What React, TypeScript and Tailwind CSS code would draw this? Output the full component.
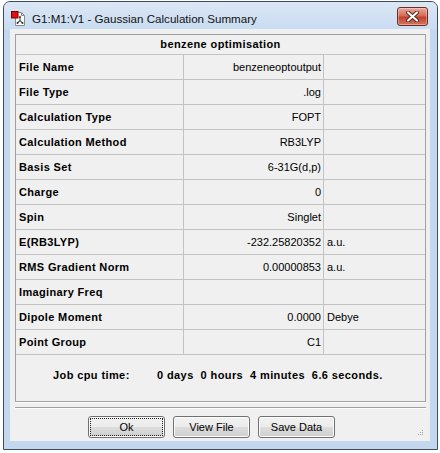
const rows: [string, string, string][] = [
  ['File Name', 'benzeneoptoutput', ''],
  ['File Type', '.log', ''],
  ['Calculation Type', 'FOPT', ''],
  ['Calculation Method', 'RB3LYP', ''],
  ['Basis Set', '6-31G(d,p)', ''],
  ['Charge', '0', ''],
  ['Spin', 'Singlet', ''],
  ['E(RB3LYP)', '-232.25820352', 'a.u.'],
  ['RMS Gradient Norm', '0.00000853', 'a.u.'],
  ['Imaginary Freq', '', ''],
  ['Dipole Moment', '0.0000', 'Debye'],
  ['Point Group', 'C1', ''],
]

function TitleIcon() {
  return (
    <svg width="16" height="16" viewBox="0 0 16 16" className="shrink-0">
      <path d="M4.5 1.5h6l3 3v10h-9z" fill="#fff" stroke="#8a8a8a" />
      <path d="M10.5 1.5v3h3" fill="none" stroke="#8a8a8a" />
      <path d="M9 6v3.5M9 9.5l-2.5 2.5M9 9.5l2.5 2.5" stroke="#555" strokeWidth="1.2" fill="none" />
      <circle cx="9" cy="6" r="1" fill="#333" />
      <circle cx="6.5" cy="12" r="1" fill="#333" />
      <circle cx="11.5" cy="12" r="1" fill="#333" />
      <rect x="0.5" y="0.5" width="6.5" height="6.5" fill="#e01010" stroke="#7a0000" />
    </svg>
  )
}

function CloseButton() {
  return (
    <div className="mr-[9px] mt-[5px] flex h-[19px] w-[31px] items-center justify-center rounded-[3px] border border-[#6e2b22] bg-[linear-gradient(#e9a99a,#d46d57_45%,#c0432c_55%,#d5765e)] shadow-[inset_0_0_0_1px_rgba(255,255,255,0.35)]">
      <svg width="13" height="11" viewBox="0 0 13 11">
        <path d="M2 1.5l9 8M11 1.5l-9 8" stroke="#5a2018" strokeWidth="4" strokeLinecap="round" />
        <path d="M2 1.5l9 8M11 1.5l-9 8" stroke="#fff" strokeWidth="2.2" strokeLinecap="round" />
      </svg>
    </div>
  )
}

function Button({ label, focused }: { label: string; focused?: boolean }) {
  return (
    <div className="flex h-[22px] w-[77px] items-center justify-center rounded-[3px] border border-[#707070] bg-[linear-gradient(#f2f2f2,#ebebeb_50%,#dddddd_50%,#cfcfcf)] p-[2px] shadow-[inset_0_0_0_1px_#fcfcfc]">
      <div
        className={
          'flex h-full w-full items-center justify-center text-[11px] text-black ' +
          (focused ? 'outline-1 outline-dotted outline-[#222]' : '')
        }
      >
        {label}
      </div>
    </div>
  )
}

export default function App() {
  return (
    <div className="h-[453px] w-[440px] overflow-hidden bg-white font-['Liberation_Sans',Arial,sans-serif]">
      <div className="ml-[3px] mt-[1px] flex h-[449px] w-[435px] flex-col rounded-t-[7px] border border-[#3d4c5e] bg-[#c3d8ef]">
        {/* title bar */}
        <div className="flex h-[27px] shrink-0 items-start rounded-t-[6px] bg-[linear-gradient(#dbe7f5,#c9dcf1)]">
          <div className="ml-[7px] mt-[9px]">
            <TitleIcon />
          </div>
          <div className="ml-[5px] mt-[9px] text-[11.6px] leading-[15px] text-[#111]">
            G1:M1:V1 - Gaussian Calculation Summary
          </div>
          <div className="ml-auto">
            <CloseButton />
          </div>
        </div>

        {/* client area */}
        <div className="relative ml-[6px] h-[412px] w-[420px] bg-[#f0f0f0] pl-[5px] pt-[5px] text-[11px] text-black">
          <div className="w-[411px] border border-[#a0a0a0]">
            <div className="flex h-[20px] items-center justify-center border-b border-[#c3c3c3] font-bold tracking-[0.4px]">
              benzene optimisation
            </div>
            {rows.map(([label, value, unit]) => (
              <div key={label} className="grid h-[25px] grid-cols-[168px_140px_101px] border-b border-[#c3c3c3]">
                <div className="flex items-center border-r border-[#c3c3c3] pl-[3px] font-bold tracking-[0.35px]">{label}</div>
                <div className="flex items-center justify-end border-r border-[#c3c3c3] pr-[2px]">{value}</div>
                <div className="flex items-center pl-[3px]">{unit}</div>
              </div>
            ))}
            <div className="flex h-[46px] items-center pb-[6px] pl-[37px] font-bold tracking-[0.4px]">
              <span className="w-[104px]">Job cpu time:</span>
              <span className="whitespace-pre">0 days  0 hours  4 minutes  6.6 seconds.</span>
            </div>
          </div>
          <div className="h-[1px] w-[411px] bg-white" />
          <div className="mt-[4px] h-[1px] w-[411px] bg-[#a0a0a0]" />
          <div className="h-[1px] w-[411px] bg-white" />

          <div className="ml-[73px] mt-[7px] flex gap-[8px]">
            <Button label="Ok" focused />
            <Button label="View File" />
            <Button label="Save Data" />
          </div>

          {/* size grip */}
          <svg className="absolute bottom-[4px] right-[6px]" width="7" height="7" viewBox="0 0 7 7">
            <rect x="5" y="0" width="1" height="1" fill="#a0a0a0" />
            <rect x="3" y="2" width="1" height="1" fill="#a0a0a0" />
            <rect x="5" y="2" width="1" height="1" fill="#a0a0a0" />
            <rect x="1" y="4" width="1" height="1" fill="#a0a0a0" />
            <rect x="3" y="4" width="1" height="1" fill="#a0a0a0" />
            <rect x="5" y="4" width="1" height="1" fill="#a0a0a0" />
          </svg>
        </div>
      </div>
    </div>
  )
}
